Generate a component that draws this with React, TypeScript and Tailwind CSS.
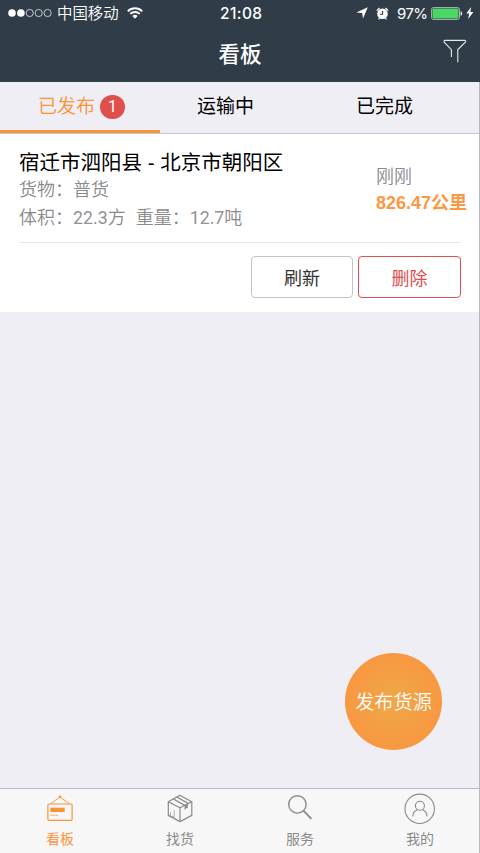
import type { ReactNode } from "react";
import clsx from "clsx";

export default function App() {
  return (
    <div className="relative flex h-[853px] w-[480px] flex-col overflow-hidden bg-[#efeef4] font-['Liberation_Sans','Noto_Sans_CJK_SC',sans-serif]">
      <header className="h-[82px] shrink-0 bg-[#303d49] text-white">
        <StatusBar />
        <NavBar />
      </header>
      <div className="flex flex-1 flex-col border-r border-[#b9b9be]">
        <Tabs />
        <OrderCard />
        <div className="flex-1" />
        <TabBar />
      </div>
      <button className="absolute top-[653px] left-[345px] h-[97px] w-[97px] rounded-full bg-[radial-gradient(circle,#efa848_0%,#f89840_70%)] pt-[3px] text-[19.2px] font-[350] text-white">
        发布货源
      </button>
    </div>
  );
}

function StatusBar() {
  return (
    <div className="flex h-[26px] items-center pl-[8px] pr-[6px]">
      <div className="flex w-[212px] items-center">
        <svg width="45" height="10" viewBox="0 0 45 10">
          <circle cx="4" cy="5" r="3.8" fill="#fff" />
          <circle cx="12.9" cy="5" r="3.8" fill="#fff" />
          <g fill="none" stroke="#fff" strokeWidth="0.7">
            <circle cx="21.7" cy="5" r="3.6" />
            <circle cx="30.7" cy="5" r="3.6" />
            <circle cx="39.6" cy="5" r="3.6" />
          </g>
        </svg>
        <span className="ml-[4px] pt-[1px] text-[15.4px] leading-[25px] font-[350]">中国移动</span>
        <svg className="ml-[8px]" width="16" height="12" viewBox="0 0 16 12">
          <g fill="none" stroke="#fff" strokeWidth="1.9">
            <path d="M0.8 4.3a10.2 10.2 0 0 1 14.4 0" />
            <path d="M3.3 6.9a6.7 6.7 0 0 1 9.4 0" />
          </g>
          <path d="M5.4 9.1a3.7 3.7 0 0 1 5.2 0L8 11.7z" fill="#fff" />
        </svg>
      </div>
      <span className="pt-[1px] font-['Inter',sans-serif] text-[15.5px] leading-[25px] font-medium tracking-[0.4px]">
        21:08
      </span>
      <div className="ml-auto flex items-center">
        <svg width="12" height="12" viewBox="0 0 12 12" fill="#fff">
          <path d="M11.8 0.3L7 11.5 6.2 6.1 0.3 5.4z" />
        </svg>
        <svg className="ml-[8px]" width="13" height="13" viewBox="0 0 13 13">
          <circle cx="6.5" cy="6.8" r="5.3" fill="#fff" />
          <path d="M0.8 3.6L3.5 1M12.2 3.6L9.5 1M2.5 12.3l1.2-1.2M10.5 12.3l-1.2-1.2" stroke="#fff" strokeWidth="1.3" />
          <path d="M6.6 3.8v3.4H3.9" fill="none" stroke="#303d49" strokeWidth="1.1" />
        </svg>
        <span className="ml-[8px] w-[30px] pt-[1px] font-['Inter',sans-serif] text-[15px] leading-[25px] tracking-[-0.6px]">
          97%
        </span>
        <svg className="ml-[4px]" width="32" height="13" viewBox="0 0 32 13">
          <rect x="0.5" y="0.5" width="28" height="12" rx="2" fill="none" stroke="#a5abb0" />
          <rect x="1.5" y="1.5" width="26" height="10" rx="0.8" fill="#4bd763" />
          <path d="M29.6 4.2c2 0.6 2 4 0 4.6z" fill="#fff" />
        </svg>
        <svg className="ml-[3px]" width="8" height="12" viewBox="0 0 8 12" fill="#fff">
          <path d="M5 0L0.4 6.5h2.8L2.1 12 7.4 5H4.4z" />
        </svg>
      </div>
    </div>
  );
}

function NavBar() {
  return (
    <div className="relative flex h-[56px] items-center justify-center">
      <h1 className="pt-[2px] text-[21.5px] leading-[54px] font-medium">看板</h1>
      <svg
        className="absolute top-[13px] right-[13px]"
        width="24"
        height="25"
        viewBox="0 0 24 25"
        fill="none"
        stroke="#e4e7e9"
        strokeWidth="1.1"
      >
        <path d="M8.4 18V10.6L1.2 3.2Q0.4 1.4 2 1.4H21.6Q23.2 1.4 22.4 3.2L14.8 10.6V23.2" />
      </svg>
    </div>
  );
}

function Tabs() {
  return (
    <div className="flex h-[52px] shrink-0 border-b border-[#c6c5ca] text-[19px] text-black">
      <div className="flex w-[160px] items-center justify-center border-b-[3px] border-[#fb9337] pt-[2px] pl-[3px] text-[#fb9337]">
        <span className="pt-[1px] font-[350]">已发布</span>
        <span className="ml-[5px] flex h-[24px] w-[25px] items-center justify-center rounded-full bg-[#df504c] font-['Roboto',sans-serif] text-[16px] text-white">
          1
        </span>
      </div>
      <div className="w-[131px] text-center leading-[49px]">运输中</div>
      <div className="w-[187px] text-center leading-[49px]">已完成</div>
    </div>
  );
}

function OrderCard() {
  return (
    <div className="h-[178px] shrink-0 bg-white pr-[18px] pl-[19px]">
      <div className="flex h-[109px] justify-between border-b border-[#e6e6e6]">
        <div className="pt-[15px] whitespace-nowrap">
          <h2 className="text-[20.5px] leading-[27px] text-black">宿迁市泗阳县 - 北京市朝阳区</h2>
          <div className="pt-[1px] text-[18px] leading-[27px] font-[350] text-[#8a8a8d]">
            <p>货物：普货</p>
            <p className="flex gap-[10px]">
              <span>
                体积：<Amount>22.3</Amount>方
              </span>
              <span>
                重量：<Amount>12.7</Amount>吨
              </span>
            </p>
          </div>
        </div>
        <div className="-mr-[6px] pt-[31px] text-[18px] whitespace-nowrap">
          <p className="leading-[25px] font-[350] text-[#8a8a8d]">刚刚</p>
          <p className="leading-[26px] font-bold text-[#fb9844]">826.47公里</p>
        </div>
      </div>
      <div className="flex justify-end gap-[5px] pt-[13px] text-[18px]">
        <button className="h-[42px] w-[102px] rounded-[4px] border border-[#c4c4c4] pt-[4px] text-[#333]">刷新</button>
        <button className="h-[42px] w-[103px] rounded-[4px] border border-[#e0504c] pt-[4px] text-[#e0504c]">
          删除
        </button>
      </div>
    </div>
  );
}

function Amount({ children }: { children: ReactNode }) {
  return <span className="font-['Roboto',sans-serif] text-[17.8px] font-normal text-[#929295]">{children}</span>;
}

function TabBar() {
  return (
    <nav className="grid h-[65px] shrink-0 grid-cols-[repeat(4,120px)] border-t border-[#b9b9bd] bg-[#f7f7f7]">
      <TabItem label="看板" active>
        <g fill="none" stroke="currentColor" strokeWidth="1.2">
          <rect x="3.9" y="11" width="24.2" height="16.4" rx="1.2" />
          <path d="M6.5 10.8L16 4l9.5 6.8" strokeWidth="0.9" />
          <path d="M6.5 22.4h8" strokeWidth="0.8" strokeDasharray="2 0.6" />
        </g>
        <circle cx="16" cy="3.7" r="1.3" fill="currentColor" />
        <rect x="6.3" y="14.7" width="14.4" height="4.3" fill="currentColor" />
      </TabItem>
      <TabItem label="找货">
        <g fill="none" stroke="currentColor" strokeWidth="1.2" strokeLinejoin="round">
          <path d="M15.8 2.2L27.8 8.8v13.6L16 28.6 4.3 22.4V8.8z" />
          <path d="M4.3 8.8L16 14.8 27.8 8.8M16 14.8v13.8" />
          <path d="M9.4 6l11.4 6.3M12.8 4l11.4 6.3" strokeWidth="1.4" />
          <path d="M6.4 19.2v3.6l3.8 1.6v-7" strokeWidth="0.7" />
        </g>
        <path d="M20.6 12.4l3.2-1.7v4.6l-1.5-0.4-1.7 2.4z" fill="currentColor" />
      </TabItem>
      <TabItem label="服务">
        <g fill="none" stroke="currentColor" strokeWidth="1.4">
          <circle cx="13.4" cy="11.4" r="8.7" />
          <path d="M19.4 17.6l8 8.2" strokeWidth="1.9" />
        </g>
      </TabItem>
      <TabItem label="我的">
        <g fill="none" stroke="currentColor" strokeWidth="1.1">
          <circle cx="15.7" cy="15.8" r="14.7" />
          <circle cx="15.9" cy="12.8" r="4.5" />
          <path d="M8.8 23.6a7.2 7.2 0 0 1 4.6-6.8M23 23.6a7.2 7.2 0 0 0-4.6-6.8" />
        </g>
      </TabItem>
    </nav>
  );
}

interface TabItemProps {
  label: string;
  active?: boolean;
  children: ReactNode;
}

function TabItem({ label, active, children }: TabItemProps) {
  return (
    <a className={clsx("flex flex-col items-center pt-[4px]", active ? "text-[#fb9337]" : "text-[#8a8a8c]")}>
      <svg width="32" height="32" viewBox="0 0 32 32">
        {children}
      </svg>
      <span className="mt-[4px] text-[14px] leading-[20px]">{label}</span>
    </a>
  );
}
